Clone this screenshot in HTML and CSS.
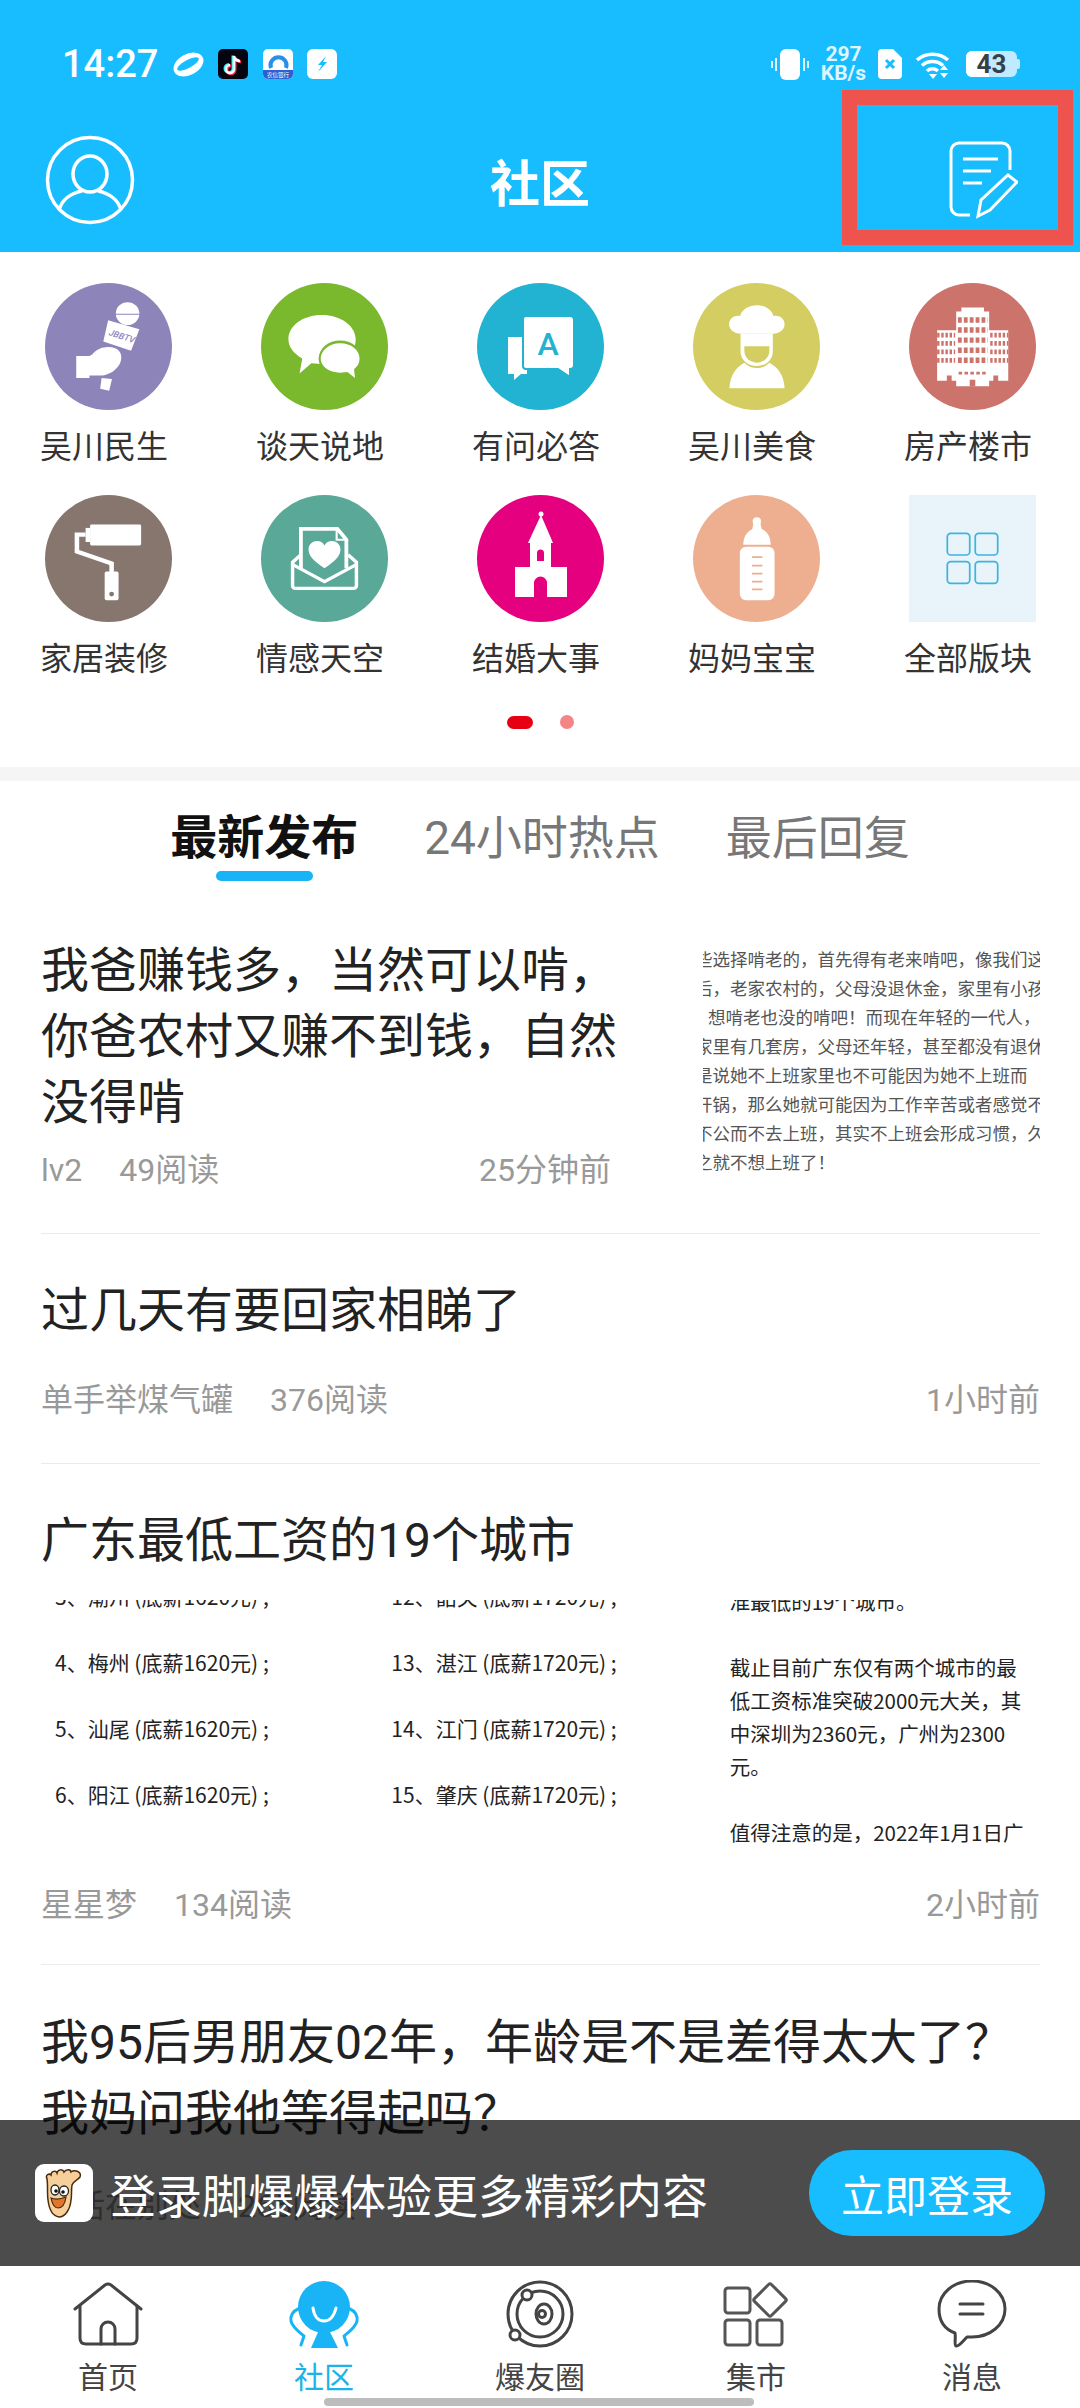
FILE: index.html
```html
<!DOCTYPE html>
<html lang="zh-CN">

<head>
  <meta charset="UTF-8">
  <meta name="viewport" content="width=device-width, initial-scale=1.0">
  <title>社区</title>
  <link rel="stylesheet" href="styles.css">
</head>

<body class="app">
  <div class="screen">
    <header class="page-head">
      <div class="status-bar">
        <div class="status-group">
          <span class="status-time">14:27</span>
          <svg class="status-planet" width="31" height="25" viewBox="0 0 31 25">
            <ellipse cx="15.5" cy="12.5" rx="16" ry="10.5" fill="#fff" transform="rotate(-28 15.5 12.5)" />
            <ellipse cx="15" cy="12" rx="12" ry="4" fill="#18bdff" transform="rotate(-28 15 12)" />
          </svg>
          <svg width="30" height="30" viewBox="0 0 30 30">
            <rect width="30" height="30" rx="5" fill="#050510" />
            <path d="M16 7v13a4 4 0 1 1-4-4M16 7c0 3 3 5 6 5" fill="none" stroke="#25f4ee" stroke-width="3" transform="translate(-1 -.6)" />
            <path d="M16 7v13a4 4 0 1 1-4-4M16 7c0 3 3 5 6 5" fill="none" stroke="#fe2c55" stroke-width="3" transform="translate(1 .8)" />
            <path d="M16 7v13a4 4 0 1 1-4-4M16 7c0 3 3 5 6 5" fill="none" stroke="#fff" stroke-width="2.6" />
          </svg>
          <svg width="30" height="30" viewBox="0 0 30 30">
            <rect width="30" height="30" rx="5" fill="#fff" />
            <path d="M8 19a8 8 0 1 1 15 0" fill="none" stroke="#2a8fe8" stroke-width="4" />
            <path d="M0 21h30v4a5 5 0 0 1-5 5H5a5 5 0 0 1-5-5z" fill="#2c5fd0" />
            <text x="15" y="28" class="status-tiny" text-anchor="middle">农信银行</text>
          </svg>
          <svg width="30" height="30" viewBox="0 0 30 30">
            <rect width="30" height="30" rx="6" fill="#fff" />
            <path d="M19 7l-8 9h4l-4 7 9-10h-4z" fill="#18bdff" />
          </svg>
        </div>
        <div class="status-group status-right">
          <svg width="38" height="31" viewBox="0 0 38 31">
            <rect x="9" y="0" width="20" height="31" rx="6" fill="#fff" />
            <path d="M5 9v13M1 12v7M33 9v13M37 12v7" stroke="#fff" stroke-width="2" opacity=".85" />
          </svg>
          <div class="status-speed"><span>297</span><span>KB/s</span></div>
          <svg width="24" height="30" viewBox="0 0 24 30">
            <path d="M4 0h11l9 9v17a4 4 0 0 1-4 4H4a4 4 0 0 1-4-4V4a4 4 0 0 1 4-4z" fill="#fff" />
            <path d="M8 11l8 8M16 11l-8 8" stroke="#18bdff" stroke-width="3" />
          </svg>
          <svg width="38" height="29" viewBox="0 0 38 29">
            <path d="M2 10a24 24 0 0 1 31 0M7 15.500a16 16 0 0 1 21 0M12 21a8 8 0 0 1 11 0" fill="none" stroke="#fff" stroke-width="3.600" />
            <path d="M14 24h8l-4 5zM25 20l4-5 4 5zM25 23h8l-4 5z" fill="#fff" />
          </svg>
          <div class="status-battery"><span class="battery-fill"></span><span class="battery-num">43</span></div>
        </div>
      </div>
      <div class="top-bar">
        <svg class="top-avatar" width="90" height="90" viewBox="0 0 90 90" fill="none" stroke="#fff" stroke-width="3.500">
          <circle cx="45" cy="45" r="42.500" />
          <ellipse cx="45" cy="39" rx="17" ry="18" />
          <path d="M14 75c3-11 13-17 23-19M76 75c-3-11-13-17-23-19" />
        </svg>
        <h1 class="top-title">社区</h1>
        <svg class="top-edit" width="70" height="78" viewBox="0 0 70 78" fill="none" stroke="#fff" stroke-width="3">
          <path d="M62 29V10a8 8 0 0 0-8-8H11a8 8 0 0 0-8 8v56a8 8 0 0 0 8 8h11" />
          <path d="M15 18h35M15 30h28M15 42h19" />
          <path d="M30 75l3-16 27-25 9 7-27 28z" />
        </svg>
        <div class="mark-box"></div>
      </div>
    </header>

    <main class="content">
      <section class="forum-grid">
        <a class="forum-item">
          <svg class="forum-icon bg-purple" viewBox="130 67 366 378" preserveAspectRatio="none">
            <circle cx="368" cy="158" r="34" fill="#fff" />
            <path d="M330 160h76" stroke="#8d84ba" stroke-width="3" />
            <path d="M312 178l90 27-24 64-80-28z" fill="#fff" />
            <text x="312" y="222" class="mic-label" transform="rotate(18 312 222)">JBBTV</text>
            <path d="M220 284h38l8-4c16-20 42-28 68-18 18 8 20 32 10 48-12 18-26 28-48 32h-38v8h-38z" fill="#fff" />
            <path d="M293 350l30 3-8 35-26-6z" fill="#fff" />
          </svg>
          <span class="forum-name">吴川民生</span>
        </a>
        <a class="forum-item">
          <svg class="forum-icon bg-green" viewBox="757 67 366 378" preserveAspectRatio="none">
            <path d="M932 162c55 0 98 32 98 74s-43 70-98 72l-30-2-34 30 8-44c-24-14-40-34-40-58 0-40 42-72 96-72z" fill="#fff" />
            <ellipse cx="985" cy="292" rx="62" ry="54" fill="#7ab92e" />
            <path d="M985 246c32 0 56 20 56 46 0 14-6 24-16 32l3 26-22-18-21 2c-32 0-56-18-56-42s24-46 56-46z" fill="#fff" />
          </svg>
          <span class="forum-name">谈天说地</span>
        </a>
        <a class="forum-item">
          <svg class="forum-icon bg-teal" viewBox="0 0 127 127">
            <path d="M31 54h19v37h-6l-7 6v-6h-6z" fill="#fff" />
            <path d="M49 33h44a4 4 0 0 1 4 4v45a4 4 0 0 1-4 4v8l-12-8H49a3 3 0 0 1-3-3V36a3 3 0 0 1 3-3z" fill="#fff" stroke="#22b3d2" stroke-width="2" />
            <text x="71" y="72" class="qa-letter" text-anchor="middle">A</text>
          </svg>
          <span class="forum-name">有问必答</span>
        </a>
        <a class="forum-item">
          <svg class="forum-icon bg-olive" viewBox="442 67 366 378" preserveAspectRatio="none">
            <path d="M580 218c-20 0-34-12-34-28 0-18 16-28 32-25 4-20 26-32 48-32s42 12 48 32c16-3 32 7 32 25 0 16-14 28-34 28z" fill="#fff" />
            <path d="M579 218h93v52c0 26-20 44-46 44s-47-18-47-44z" fill="#fff" />
            <path d="M590 255h72v14c0 20-16 35-36 35s-36-15-36-35z" fill="#d3cd62" />
            <path d="M590 304c12 12 24 16 36 16s24-4 36-16c26 14 42 38 44 76H547c2-38 18-62 43-76z" fill="#fff" />
          </svg>
          <span class="forum-name">吴川美食</span>
        </a>
        <a class="forum-item">
          <svg class="forum-icon bg-rose" viewBox="1069 67 366 378" preserveAspectRatio="none">
            <path d="M1220 140h65v12h15v56h55v150h-55v16h-95v-16h-55V208h55v-56h15z" fill="#fff" />
            <path d="M1210 177h86M1210 207h86M1210 237h86M1210 267h86M1210 297h86" class="tower-win" />
            <path d="M1150 222h52M1150 247h52M1150 272h52M1150 297h52M1303 222h52M1303 247h52M1303 272h52M1303 297h52" class="wing-win" />
            <path d="M1212 335h82" class="door-win" />
            <path d="M1178 360v-18h14v18zM1244 375v-20h16v20zM1312 360v-18h14v18z" fill="#cc736c" />
          </svg>
          <span class="forum-name">房产楼市</span>
        </a>
        <a class="forum-item">
          <svg class="forum-icon bg-brown" viewBox="130 707 366 378" preserveAspectRatio="none">
            <rect x="260" y="795" width="147" height="62" rx="4" fill="#fff" />
            <rect x="247" y="805" width="14" height="42" fill="#fff" />
            <path d="M247 825h-25v50l100 36v30" fill="none" stroke="#fff" stroke-width="13" />
            <rect x="302" y="935" width="40" height="85" rx="5" fill="#fff" />
            <circle cx="322" cy="1002" r="7" fill="#87766e" />
          </svg>
          <span class="forum-name">家居装修</span>
        </a>
        <a class="forum-item">
          <svg class="forum-icon bg-sea" viewBox="757 707 366 378" preserveAspectRatio="none">
            <path d="M872 925V808h105l26 32v85" fill="none" stroke="#fff" stroke-width="11" />
            <path d="M975 812v28h28" fill="none" stroke="#fff" stroke-width="6" />
            <path d="M872 885l-24 22v70a8 8 0 0 0 8 8h168a8 8 0 0 0 8-8v-70l-24-22" fill="none" stroke="#fff" stroke-width="10" />
            <path d="M850 915l90 50 90-50" fill="none" stroke="#fff" stroke-width="10" />
            <path d="M940 925c-30-22-46-36-46-56 0-28 36-34 46-12 10-22 46-16 46 12 0 20-16 34-46 56z" fill="#fff" />
          </svg>
          <span class="forum-name">情感天空</span>
        </a>
        <a class="forum-item">
          <svg class="forum-icon bg-pink" viewBox="0 0 127 127">
            <circle cx="64" cy="19" r="2.500" fill="#fff" />
            <path d="M64 20l12 28H51z" fill="#fff" />
            <path d="M53 48h21v24h16v30H70V88a6 6 0 0 0-13 0v14H38V72h15z" fill="#fff" />
            <path d="M60 66V58a3.500 3.500 0 0 1 7 0v8z" fill="#e4007f" />
          </svg>
          <span class="forum-name">结婚大事</span>
        </a>
        <a class="forum-item">
          <svg class="forum-icon bg-peach" viewBox="442 707 366 378" preserveAspectRatio="none">
            <circle cx="626" cy="785" r="12" fill="#fff" />
            <path d="M616 790h20l4 18c16 8 26 24 26 47H587c0-23 10-39 26-47z" fill="#fff" />
            <rect x="577" y="861" width="100" height="159" rx="18" fill="#fff" />
            <path d="M612 892h30M612 917h30M612 941h30M612 965h30M612 988h30" stroke="#eeaf90" stroke-width="5" />
          </svg>
          <span class="forum-name">妈妈宝宝</span>
        </a>
        <a class="forum-item">
          <svg class="forum-icon bg-all" viewBox="1069 705 368 381" preserveAspectRatio="none">
            <g fill="none" stroke="#3eb3e0" stroke-width="5">
              <rect x="1180" y="820" width="65" height="65" rx="10" />
              <rect x="1261" y="820" width="65" height="65" rx="10" />
              <rect x="1180" y="905" width="65" height="65" rx="10" />
              <rect x="1261" y="905" width="65" height="65" rx="10" />
            </g>
          </svg>
          <span class="forum-name">全部版块</span>
        </a>
      </section>

      <div class="pager">
        <span class="pager-on"></span>
        <span class="pager-off"></span>
      </div>
      <div class="section-gap"></div>

      <nav class="feed-tabs">
        <a class="feed-tab feed-tab-on">最新发布<i class="tab-line"></i></a>
        <a class="feed-tab">24小时热点</a>
        <a class="feed-tab">最后回复</a>
      </nav>

      <section class="feed">
        <article class="post post-side">
          <div class="post-main">
            <h2 class="post-title">我爸赚钱多，当然可以啃，你爸农村又赚不到钱，自然没得啃</h2>
            <div class="post-meta">
              <div class="meta-left"><span>lv2</span><span>49阅读</span></div>
              <span>25分钟前</span>
            </div>
          </div>
          <div class="thumb-text">
            <p>些选择啃老的，首先得有老来啃吧，像我们这</p>
            <p>后，老家农村的，父母没退休金，家里有小孩</p>
            <p class="thumb-line-in">想啃老也没的啃吧！而现在年轻的一代人，</p>
            <p>家里有几套房，父母还年轻，甚至都没有退休</p>
            <p>是说她不上班家里也不可能因为她不上班而</p>
            <p>开锅，那么她就可能因为工作辛苦或者感觉不</p>
            <p>不公而不去上班，其实不上班会形成习惯，久</p>
            <p>之就不想上班了！</p>
          </div>
        </article>

        <article class="post">
          <h2 class="post-title">过几天有要回家相睇了</h2>
          <div class="post-meta post-meta-gap">
            <div class="meta-left"><span>单手举煤气罐</span><span>376阅读</span></div>
            <span>1小时前</span>
          </div>
        </article>

        <article class="post post-pics">
          <h2 class="post-title">广东最低工资的19个城市</h2>
          <div class="pic-row">
            <div class="pic-list">
              <p>3、潮州 (底薪1620元) ;</p>
              <p>4、梅州 (底薪1620元) ;</p>
              <p>5、汕尾 (底薪1620元) ;</p>
              <p>6、阳江 (底薪1620元) ;</p>
              <p>7、揭阳 (底薪1620元) ;</p>
            </div>
            <div class="pic-list">
              <p>12、韶关 (底薪1720元) ;</p>
              <p>13、湛江 (底薪1720元) ;</p>
              <p>14、江门 (底薪1720元) ;</p>
              <p>15、肇庆 (底薪1720元) ;</p>
              <p>16、云浮 (底薪1720元) ;</p>
            </div>
            <div class="pic-para">
              <p>准最低的19个城市。</p>
              <p class="para-break">截止目前广东仅有两个城市的最<br>低工资标准突破2000元大关，其<br>中深圳为2360元，广州为2300<br>元。</p>
              <p class="para-break">值得注意的是，2022年1月1日广<br>东将调整最低工资标准</p>
            </div>
          </div>
          <div class="post-meta">
            <div class="meta-left"><span>星星梦</span><span>134阅读</span></div>
            <span>2小时前</span>
          </div>
        </article>

        <article class="post post-wide">
          <h2 class="post-title">我95后男朋友02年，年龄是不是差得太大了？我妈问我他等得起吗？</h2>
          <div class="post-meta post-meta-gap">
            <div class="meta-left"><span>生活在别处</span><span>265阅读</span></div>
            <span>3小时前</span>
          </div>
        </article>
      </section>

      <div class="login-banner">
        <svg class="login-logo" viewBox="0 0 58 58">
          <rect width="58" height="58" rx="9" fill="#fff" />
          <path d="M12 15c-2-4 2-6 4-4 0-4 5-5 6-2 1-4 6-4 7-1 2-3 7-3 7 0 4-3 11 0 9 5-2 3-7 4-8 8-1 6 0 10-1 15-1 10-6 17-12 17-7-1-10-9-11-17-1-8 0-16-1-21z" fill="#f7cf9b" stroke="#4a2c0a" stroke-width="1.500" />
          <ellipse cx="20" cy="26" rx="4" ry="5" fill="#fff" stroke="#222" stroke-width="1.300" />
          <ellipse cx="29" cy="27" rx="4.500" ry="5" fill="#fff" stroke="#222" stroke-width="1.300" />
          <circle cx="21" cy="27" r="1.800" fill="#111" />
          <circle cx="28" cy="28" r="1.800" fill="#111" />
          <path d="M16 34c5 2 10 1 15-1-1 7-4 11-8 11-4 0-6-5-7-10z" fill="#e0752e" stroke="#4a2c0a" stroke-width="1.200" />
        </svg>
        <span class="login-text">登录脚爆爆体验更多精彩内容</span>
        <a class="login-btn">立即登录</a>
      </div>
    </main>

    <footer class="tab-bar">
      <a class="tab-item">
        <svg class="tab-icon" viewBox="0 0 100 72">
          <path d="M17 29L47 5q3-2 6 0l30 24" />
          <path d="M22 26v32q0 6 6 6h45q6 0 6-6V26" />
          <path d="M43 64V49a7 7 0 0 1 14 0v15" />
        </svg>
        <span class="tab-name">首页</span>
      </a>
      <a class="tab-item tab-item-on">
        <svg class="tab-icon" viewBox="0 0 100 72">
          <circle cx="50" cy="27" r="26" fill="#18b4f5" stroke="none" />
          <path d="M45 50h10l9 18H37z" fill="#18b4f5" stroke="none" />
          <path d="M39 28c1 8 5 13 11 13s10-5 12-13" stroke="#fff" />
          <path d="M24 29c-5 2-8 7-7 12 1 6 8 11 13 15l-3 9M76 29c5 2 8 7 7 12-1 6-8 11-13 15l3 9" />
        </svg>
        <span class="tab-name">社区</span>
      </a>
      <a class="tab-item">
        <svg class="tab-icon" viewBox="0 0 100 72">
          <circle cx="50" cy="34" r="32" />
          <circle cx="50" cy="34" r="23" />
          <circle cx="37" cy="15" r="5" fill="#fff" />
          <circle cx="25" cy="55" r="5" fill="#fff" />
          <ellipse cx="54" cy="34" rx="8" ry="10" />
          <circle cx="52" cy="34" r="3.500" />
        </svg>
        <span class="tab-name">爆友圈</span>
      </a>
      <a class="tab-item">
        <svg class="tab-icon tab-icon-gray" viewBox="0 0 100 72">
          <rect x="19" y="8" width="25" height="25" rx="3" />
          <rect x="19" y="40" width="25" height="25" rx="3" />
          <rect x="51" y="40" width="25" height="25" rx="3" />
          <rect x="52" y="8" width="24" height="24" rx="2" transform="rotate(45 64 20)" />
        </svg>
        <span class="tab-name">集市</span>
      </a>
      <a class="tab-item">
        <svg class="tab-icon" viewBox="0 0 100 72">
          <path d="M34 66c-2-1 0-8-1-13C22 49 17 40 17 29 17 13 32 1 50 1s33 12 33 28-15 28-33 28c-2 0-4 0-5 0-3 3-8 10-11 9z" />
          <path d="M38 24h23M38 34h23" />
        </svg>
        <span class="tab-name">消息</span>
      </a>
      <div class="home-bar"></div>
    </footer>
  </div>
</body>

</html>
```

FILE: styles.css
```css
.app {
  margin: 0;
  background-color: #fff;
  font-family: Roboto, "Noto Sans CJK SC", sans-serif;
  color: #222;
}

.screen {
  display: flex;
  flex-direction: column;
  width: 1080px;
  height: 2408px;
  overflow: hidden;
}

p,
h1,
h2 {
  margin: 0;
  font-weight: 400;
}

/* status bar and title */
.page-head {
  background-color: #18bdff;
  flex-shrink: 0;
}

.status-bar {
  display: flex;
  justify-content: space-between;
  align-items: center;
  box-sizing: border-box;
  height: 90px;
  padding: 38px 60px 0 62px;
}

.status-group {
  display: flex;
  align-items: center;
  gap: 14.500px;
}

.status-right {
  gap: 13px;
}

.status-time {
  font-size: 38px;
  font-weight: 500;
  line-height: 52px;
  color: #fff;
}

.status-tiny {
  font-size: 5.500px;
  fill: #fff;
  font-family: "Noto Sans CJK SC", sans-serif;
}

.status-speed {
  display: flex;
  flex-direction: column;
  align-items: center;
  width: 43px;
  font-size: 21px;
  font-weight: 700;
  line-height: 19px;
  color: #dff5ff;
}

.status-battery {
  display: flex;
  justify-content: center;
  align-items: center;
  position: relative;
  width: 51px;
  height: 26px;
  margin-right: 3px;
  border-radius: 6px;
  background-color: #bfeaff;
}

.status-battery::after {
  content: "";
  position: absolute;
  right: -3px;
  top: 8px;
  width: 3px;
  height: 10px;
  border-radius: 0 2px 2px 0;
  background-color: #bfeaff;
}

.battery-fill {
  position: absolute;
  left: 0;
  top: 0;
  bottom: 0;
  width: 23px;
  border-radius: 6px 0 0 6px;
  background-color: #fff;
}

.battery-num {
  position: relative;
  font-size: 26px;
  font-weight: 700;
  color: #374048;
}

.top-bar {
  display: grid;
  grid-template-columns: 1fr auto 1fr;
  align-items: center;
  position: relative;
  box-sizing: border-box;
  height: 162px;
  padding: 18px 62px 0;
}

.top-avatar {
  margin-left: -17px;
}

.top-title {
  font-family: "Noto Sans CJK SC", sans-serif;
  font-size: 50px;
  font-weight: 700;
  color: #fff;
}

.top-edit {
  justify-self: end;
}

.mark-box {
  position: absolute;
  top: 0;
  left: 842px;
  box-sizing: border-box;
  width: 231px;
  height: 155px;
  border: 15px solid #ef534e;
}

/* forum shortcuts */
.content {
  position: relative;
  flex: 1;
  min-height: 0;
  overflow: hidden;
}

.forum-grid {
  display: grid;
  grid-template-columns: repeat(5, 216px);
  row-gap: 27px;
  padding-top: 31px;
}

.forum-item {
  display: flex;
  flex-direction: column;
  align-items: center;
}

.forum-icon {
  width: 127px;
  height: 127px;
  border-radius: 50%;
}

.bg-purple { background-color: #8d84ba; }
.bg-green { background-color: #7ab92e; }
.bg-teal { background-color: #22b3d2; }
.bg-olive { background-color: #d3cd62; }
.bg-rose { background-color: #cc736c; }
.bg-brown { background-color: #87766e; }
.bg-sea { background-color: #5aa898; }
.bg-pink { background-color: #e4007f; }
.bg-peach { background-color: #eeaf90; }

.bg-all {
  border-radius: 0;
  background-color: #e8f4fa;
}

.mic-label {
  font-family: Roboto, sans-serif;
  font-size: 26px;
  font-style: italic;
  font-weight: 500;
  fill: #8d84ba;
}

.qa-letter {
  font-family: Roboto, sans-serif;
  font-size: 32px;
  font-weight: 500;
  fill: #22b3d2;
}

.tower-win {
  fill: none;
  stroke: #cc736c;
  stroke-width: 16;
  stroke-dasharray: 11 6;
}

.wing-win {
  fill: none;
  stroke: #cc736c;
  stroke-width: 14;
  stroke-dasharray: 7 5;
}

.door-win {
  fill: none;
  stroke: #cc736c;
  stroke-width: 8;
  stroke-dasharray: 10 7;
}

.forum-name {
  margin-top: 10px;
  padding-right: 8px;
  font-family: "Noto Sans CJK SC", sans-serif;
  font-size: 32px;
  line-height: 48px;
  color: #333;
}

.pager {
  display: flex;
  justify-content: center;
  align-items: center;
  gap: 27px;
  height: 14px;
  padding-top: 35px;
}

.pager-on {
  width: 26px;
  height: 13px;
  border-radius: 7px;
  background-color: #e60012;
}

.pager-off {
  width: 14px;
  height: 14px;
  border-radius: 50%;
  background-color: #f58484;
}

.section-gap {
  height: 14px;
  margin-top: 38px;
  background-color: #f5f5f5;
}

/* feed tabs */
.feed-tabs {
  display: flex;
  justify-content: center;
  gap: 66px;
  height: 72px;
  padding-top: 28px;
}

.feed-tab {
  display: flex;
  flex-direction: column;
  align-items: center;
  font-family: Roboto, "Noto Sans CJK SC", sans-serif;
  font-size: 46px;
  line-height: 58px;
  color: #777;
}

.feed-tab-on {
  font-size: 47px;
  font-weight: 700;
  color: #111;
}

.tab-line {
  width: 97px;
  height: 10px;
  margin-top: 4px;
  border-radius: 5px;
  background-color: #18b4f5;
}

/* feed */
.feed {
  padding: 15px 40px 0 41px;
}

.post {
  padding: 44px 0 40px;
  border-bottom: 1px solid #ebebeb;
}

.post-title {
  font-family: Roboto, "Noto Sans CJK SC", sans-serif;
  font-size: 48px;
  line-height: 65px;
  color: #222;
}

.post-meta {
  display: flex;
  justify-content: space-between;
  font-family: Roboto, "Noto Sans CJK SC", sans-serif;
  font-size: 32px;
  line-height: 46px;
  color: #999;
}

.post-meta-gap {
  margin-top: 34px;
}

.meta-left {
  display: flex;
  gap: 37px;
}

.post-side {
  display: flex;
  justify-content: space-between;
  padding-top: 42px;
}

.post-side .post-title {
  line-height: 66px;
}

.post-main {
  width: 576px;
}

.post-main .post-meta {
  margin-top: 11px;
  padding-right: 6px;
}

.thumb-text {
  width: 337px;
  height: 230px;
  margin-top: 6px;
  overflow: hidden;
  font-family: "Noto Sans CJK SC", sans-serif;
  font-size: 17.500px;
  line-height: 29px;
  color: #555;
  white-space: nowrap;
}

.thumb-text p {
  margin-left: -8px;
}

.thumb-text .thumb-line-in {
  margin-left: 5px;
}

.post-pics {
  padding-bottom: 36px;
}

.pic-row {
  display: grid;
  grid-template-columns: repeat(3, 1fr);
  gap: 10px;
  height: 251px;
  margin: 27px 0 31px;
  overflow: hidden;
  font-family: "Noto Sans CJK SC", sans-serif;
  font-size: 21px;
  font-weight: 700;
  color: #222;
  white-space: nowrap;
}

.pic-list,
.pic-para {
  height: 251px;
  padding-left: 14px;
  overflow: hidden;
}

.pic-list p {
  line-height: 66px;
}

.pic-list p:first-child {
  margin-top: -37px;
}

.pic-para {
  padding-left: 16px;
  font-size: 20.500px;
  font-weight: 500;
  line-height: 33px;
}

.pic-para p:first-child {
  margin-top: -15px;
}

.para-break {
  margin-top: 33px;
}

.post-wide {
  padding-top: 42px;
}

.post-wide .post-title {
  line-height: 71px;
}

/* login banner over the feed */
.login-banner {
  display: flex;
  align-items: center;
  position: absolute;
  left: 0;
  right: 0;
  bottom: 0;
  box-sizing: border-box;
  height: 146px;
  padding: 0 35px;
  background-color: rgba(0, 0, 0, 0.7);
}

.login-logo {
  width: 58px;
  height: 58px;
}

.login-text {
  margin-left: 17px;
  font-family: "Noto Sans CJK SC", sans-serif;
  font-size: 46px;
  color: #fff;
}

.login-btn {
  display: flex;
  justify-content: center;
  align-items: center;
  width: 236px;
  height: 86px;
  margin-left: auto;
  border-radius: 43px;
  background-color: #18bdff;
  font-family: "Noto Sans CJK SC", sans-serif;
  font-size: 43px;
  color: #fff;
}

/* bottom tabs */
.tab-bar {
  display: grid;
  grid-template-columns: repeat(5, 216px);
  position: relative;
  flex-shrink: 0;
  box-sizing: border-box;
  height: 142px;
  padding-top: 14px;
  background-color: #fff;
}

.tab-item {
  display: flex;
  flex-direction: column;
  align-items: center;
}

.tab-icon {
  width: 100px;
  height: 72px;
  fill: none;
  stroke: #444;
  stroke-width: 3;
  stroke-linecap: round;
  stroke-linejoin: round;
}

.tab-icon-gray {
  stroke: #555;
}

.tab-name {
  margin-top: 5px;
  font-family: "Noto Sans CJK SC", sans-serif;
  font-size: 30px;
  line-height: 36px;
  color: #444;
}

.tab-item-on .tab-icon {
  stroke: #18b4f5;
}

.tab-item-on .tab-name {
  color: #1cb3e8;
}

.home-bar {
  position: absolute;
  left: 324px;
  bottom: 2px;
  width: 430px;
  height: 8px;
  border-radius: 4px;
  background-color: #bdbdbd;
}
```
